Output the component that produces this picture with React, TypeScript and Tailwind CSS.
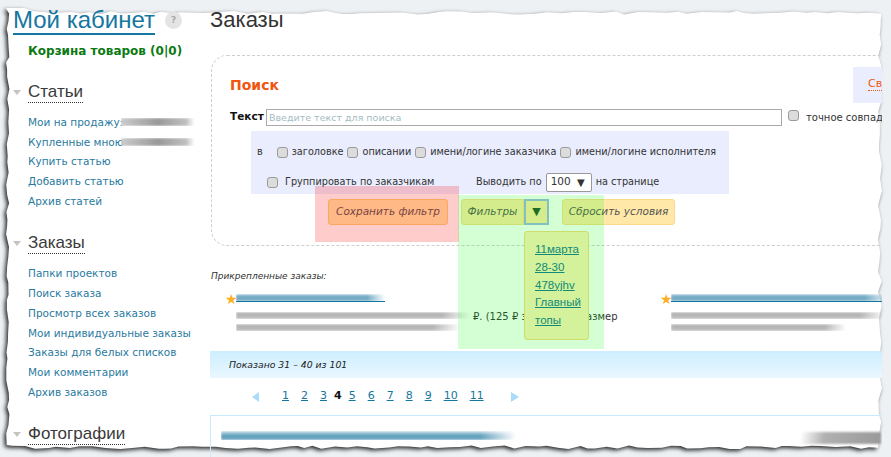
import React from 'react';

// torn paper edge of the screenshot frame
const tornPath = () => {
  let seed = 11;
  const rnd = () => {
    seed = (seed * 16807) % 2147483647;
    return seed / 2147483647;
  };
  const pts: string[] = [];
  const W = 882;
  const H = 449;
  for (let x = 6; x < W; x += 7 + rnd() * 9) pts.push(`${x.toFixed(1)},${(x < 30 ? 8 : 11 + rnd() * 3.5).toFixed(1)}`);
  for (let y = 14; y < H; y += 6 + rnd() * 10) pts.push(`${(W - rnd() * 4).toFixed(1)},${y.toFixed(1)}`);
  for (let x = W - 4; x > 6; x -= 6 + rnd() * 9) pts.push(`${x.toFixed(1)},${(H - rnd() * 3.5).toFixed(1)}`);
  for (let y = H - 4; y > 10; y -= 5 + rnd() * 8) pts.push(`${(6 + rnd() * 3.5).toFixed(1)},${y.toFixed(1)}`);
  return `M${pts.join(' L')} Z`;
};

const torn = tornPath();

const Frame = () => (
  <svg className="absolute left-0 top-0" width="891" height="457" viewBox="0 0 891 457">
    <path d={torn} fill="#ffffff" className="drop-shadow-[-2px_2px_2px_rgba(0,0,0,0.85)]" />
  </svg>
);

const Section = ({ title, links }: { title: string; links: string[] }) => (
  <div>
    <div className="relative pl-[15px] h-[22px]">
      <span className="absolute left-0 top-[8px] w-0 h-0 border-x-[4px] border-x-transparent border-t-[5px] border-t-[#c4c4c4]" />
      <span className="text-[17px] leading-[20px] text-[#3a3a3a] border-b border-dotted border-[#333] inline-block font-['Liberation_Sans',sans-serif]">{title}</span>
    </div>
    <div className="mt-[9px] pl-[15px]">
      {links.map(link => (
        <div key={link} className="h-[19.7px] leading-[19.7px] text-[#2a7aa0] whitespace-nowrap">{link}</div>
      ))}
    </div>
  </div>
);

const Smear = ({ className }: { className: string }) => (
  <div className={`blur-[1px] [mask-image:linear-gradient(90deg,#000_88%,transparent)] ${className}`} />
);

const graySmear = 'h-[7px] bg-[linear-gradient(180deg,#d8d8d8_0%,#a0a0a0_35%,#d0d0d0_55%,#a8a8a8_80%,#dddddd_100%)]';
const blueSmear = 'h-[7px] bg-[linear-gradient(180deg,#c9e0ea_0%,#5f9fbc_40%,#86b6cc_70%,#4f95b5_100%)]';

const Box = ({ className = '' }: { className?: string }) => (
  <input
    type="checkbox"
    readOnly
    className={`appearance-none w-[11px] h-[11px] rounded-[3px] border border-[#9a9a9a] bg-[#dcdcdc] shrink-0 ${className}`}
  />
);

const Pinned = ({ first, second, title, width }: { first: number; second: number; title: number; width: number }) => (
  <div className="flex shrink-0" style={{ width }}>
    <span className="text-[#fdb022] text-[14px] leading-[13px] w-[11px] shrink-0 -mt-[1px]">★</span>
    <div className="min-w-0">
      <div style={{ width: title }}><Smear className={blueSmear} /></div>
      <div className="h-px bg-[#0f76a0]" style={{ width: title }} />
      <div className="flex items-center mt-[9px] h-[9px]">
        <div style={{ width: first }}><Smear className={graySmear} /></div>
      </div>
      <div className="mt-[4px]" style={{ width: second }}><Smear className={graySmear} /></div>
    </div>
  </div>
);

const pages = ['1', '2', '3', '4', '5', '6', '7', '8', '9', '10', '11'];

export default function App() {
  return (
    <div className="relative w-[891px] h-[457px] overflow-hidden bg-[#edf1f4] text-[10.5px] text-[#333] font-['DejaVu_Sans',sans-serif]">
      <Frame />

      <div className="relative flex h-full">
        {/* Sidebar */}
        <aside className="w-[210px] shrink-0 pl-[13px] pt-[6px]">
          <div className="flex items-center">
            <span className="text-[24px] leading-[27px] text-[#1577a0] border-b-2 border-[#1577a0] font-['Liberation_Sans',sans-serif]">Мой кабинет</span>
            <span className="ml-[10px] w-[17px] h-[17px] rounded-full bg-[#e4e4e4] text-[#aaa] text-[9px] font-bold flex items-center justify-center">?</span>
          </div>
          <div className="mt-[8px] ml-[15px] font-bold text-[#0b7a12] text-[12px] leading-[16px]">Корзина товаров (0|0)</div>
          <div className="mt-[23px]">
            <Section title="Статьи" links={['Мои на продажу:', 'Купленные мною', 'Купить статью', 'Добавить статью', 'Архив статей']} />
          </div>
          <div className="mt-[22px]">
            <Section title="Заказы" links={['Папки проектов', 'Поиск заказа', 'Просмотр всех заказов', 'Мои индивидуальные заказы', 'Заказы для белых списков', 'Мои комментарии', 'Архив заказов']} />
          </div>
          <div className="mt-[22px]">
            <Section title="Фотографии" links={[]} />
          </div>
        </aside>

        {/* Main */}
        <main className="w-[672px] min-w-0 overflow-hidden pt-[7px]">
          <h1 className="text-[22px] leading-[26px] text-[#333] font-['Liberation_Sans',sans-serif]">Заказы</h1>

          <section className="relative mt-[22px] ml-px w-[720px] h-[191px] border border-dashed border-[#cfcfcf] rounded-tl-[16px] rounded-bl-[16px] pl-[18px] pt-[20px]">
            <div className="text-[14px] leading-[18px] font-bold text-[#f0560f]">Поиск</div>

            <div className="flex items-center mt-[14px] h-[18px]">
              <span className="font-bold text-[#111] w-[36px]">Текст</span>
              <input
                readOnly
                placeholder="Введите текст для поиска"
                className="w-[516px] h-[17px] border border-[#aaa] px-[2px] text-[9.5px] placeholder:text-[#a3bcc4] outline-none"
              />
              <Box className="ml-[6px] -mt-[4px]" />
              <span className="ml-[7px] whitespace-nowrap text-[10px]">точное совпадение</span>
            </div>

            <div className="ml-[21px] mt-[5px] w-[478px] h-[63px] bg-[#e9edfe] pl-[6px] text-[9.7px]">
              <div className="flex items-center h-[42px] whitespace-nowrap">
                <span className="mr-[14px]">в</span><Box />
                <span className="mx-[4px]">заголовке</span><Box />
                <span className="mx-[4px]">описании</span><Box />
                <span className="mx-[4px]">имени/логине заказчика</span><Box />
                <span className="ml-[4px]">имени/логине исполнителя</span>
              </div>
              <div className="flex items-center h-[18px] whitespace-nowrap">
                <Box className="ml-[10px]" />
                <span className="ml-[7px] w-[191px]">Группировать по заказчикам</span>
                <span>Выводить по</span>
                <span className="ml-[4px] w-[46px] h-[19px] shrink-0 border border-[#999] rounded-[2px] bg-white flex items-center justify-between pl-[4px] pr-[6px] text-[10.5px]">100 <span className="text-[10px]">▼</span></span>
                <span className="ml-[4px]">на странице</span>
              </div>
            </div>

            <div className="flex mt-[5px] ml-[98px] h-[26px] italic text-[10.5px] text-[#555]">
              <button className="w-[120px] rounded-[3px] bg-[#ffe8a8] border border-[#fbd07a]">Сохранить фильтр</button>
              <button className="ml-[13px] w-[63px] rounded-l-[3px] bg-[#ffe8a8] border border-[#fbd98a]">Фильтры</button>
              <button className="w-[25px] bg-[#ffe8a8] border-2 border-[#a1b4e7] text-[#24502a] not-italic text-[11px]">▼</button>
              <button className="ml-[13px] w-[113px] rounded-[3px] bg-[#ffe8a8] border border-[#fbd98a]">Сбросить условия</button>
            </div>
          </section>

          <div className="mt-[24px] ml-px text-[9px] leading-[12px] italic">Прикрепленные заказы:</div>

          <div className="flex mt-[12px] ml-[15px] h-[50px] relative">
            <Pinned first={234} second={224} title={149} width={435} />
            <Pinned first={215} second={175} title={220} width={240} />
            <span className="absolute left-[248px] top-[17px] text-[10px] leading-[12px] whitespace-nowrap">₽. (125 ₽ за 100 зн., размер</span>
          </div>

          <div className="mt-[7px] w-[672px] h-[27px] bg-gradient-to-b from-[#cdeeff] to-[#e9f7ff] pl-[19px] flex items-center italic text-[9.3px] text-[#222]">
            Показано 31 – 40 из 101
          </div>

          <nav className="flex items-center h-[37px] ml-[42px] text-[#1577a0] text-[11px]">
            <span className="w-0 h-0 border-y-[5px] border-y-transparent border-r-[7px] border-r-[#a9dcf8] mr-[17px]" />
            {pages.map(page => (
              page === '4'
                ? <span key={page} className="font-bold text-[#111] mx-[1px]">{page}</span>
                : <span key={page} className="px-[6px]"><span className="underline">{page}</span></span>
            ))}
            <span className="w-0 h-0 border-y-[5px] border-y-transparent border-l-[8px] border-l-[#a9dcf8] ml-[21px]" />
          </nav>

          <div className="w-[680px] h-[60px] border border-[#c5ecff] relative">
            <div className="absolute left-[10px] top-[15px] w-[295px]"><Smear className="h-[9px] bg-[linear-gradient(180deg,#d4e6ee_0%,#5f9fbc_50%,#6ea8c2_100%)]" /></div>
            <div className="absolute left-[590px] top-[16px] w-[80px]"><div className="blur-[1px] h-[12px] bg-[linear-gradient(100deg,transparent_0%,#b0b0b0_30%,#999_100%)]" /></div>
          </div>
        </main>
      </div>

      {/* Inline smears on the sidebar's cut-off links */}
      <div className="absolute left-[121px] top-[118px] w-[74px]"><Smear className="h-[8px] bg-[linear-gradient(90deg,#ccc_0%,#999_50%,#ccc_100%)]" /></div>
      <div className="absolute left-[121px] top-[138px] w-[74px]"><Smear className="h-[8px] bg-[linear-gradient(90deg,#ccc_0%,#999_50%,#ccc_100%)]" /></div>

      {/* Right cut-off block */}
      <div className="absolute left-[853px] top-[67px] w-[29px] h-[36px] bg-[#e9edfe] pl-[15px] pt-[9px] text-[11px] text-[#f0560f] overflow-hidden whitespace-nowrap">
        <span className="border-b border-dotted border-[#f0560f]">Св</span>
      </div>

      {/* Highlight overlays */}
      <div className="absolute left-[315px] top-[186px] w-[144px] h-[56px] bg-[rgba(255,0,0,0.2)]" />
      <div className="absolute left-[458px] top-[195px] w-[146px] h-[154px] bg-[rgba(0,255,0,0.17)]" />

      {/* Filter dropdown */}
      <div className="absolute left-[524px] top-[231px] w-[65px] h-[109px] bg-[#d3f29b] border border-[#cfdc6a] rounded-[3px] pl-[10px] pt-[9px] text-[11.5px] text-[#108a7a] underline font-['Liberation_Sans',sans-serif]">
        <div className="h-[17.8px] leading-[17.8px]">11марта</div>
        <div className="h-[17.8px] leading-[17.8px]">28-30</div>
        <div className="h-[17.8px] leading-[17.8px]">478yjhv</div>
        <div className="h-[17.8px] leading-[17.8px] whitespace-nowrap">Главный</div>
        <div className="h-[17.8px] leading-[17.8px]">топы</div>
      </div>
    </div>
  );
}
